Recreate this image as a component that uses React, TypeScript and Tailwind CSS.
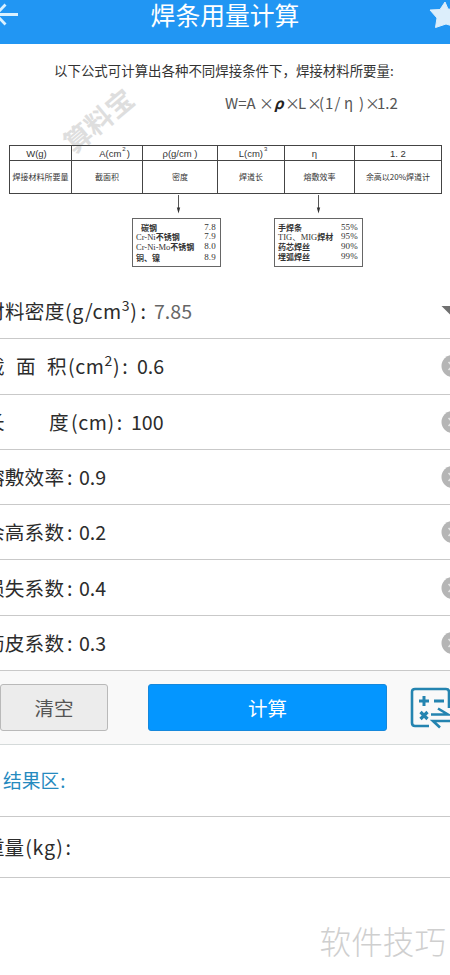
import type { ReactNode } from "react";

const columns = [
  { head: "W(g)", body: "焊接材料所要量", headCls: "pr-[8px]" },
  { head: "A(cm", sup: "2", tail: ")", body: "截面积", headCls: "pl-[15px]" },
  { head: "ρ(g/cm )", body: "密度", headCls: "pl-0" },
  { head: "L(cm)", sup: "3", body: "焊道长", headCls: "pl-[5px]" },
  { head: "η", body: "熔敷效率", headCls: "pr-[10px]" },
  { head: "1. 2", body: "余高以20%焊道计", headCls: "pl-0" },
];

const densities = [
  ["碳钢", "7.8", "pl-[5px]"],
  ["Cr-Ni|不锈钢", "7.9", ""],
  ["Cr-Ni-Mo|不锈钢", "8.0", ""],
  ["铜、镍", "8.9", ""],
];

const rates = [
  ["手焊条", "55%", ""],
  ["TIG、MIG|焊材", "95%", ""],
  ["药芯焊丝", "90%", ""],
  ["埋弧焊丝", "99%", ""],
];

function DownArrow() {
  return (
    <svg className="block h-[20px] w-[7px]" viewBox="0 0 7 20">
      <path d="M3.5 0V14" stroke="#555" strokeWidth="1" />
      <path d="M1.8 12.5H5.2L3.5 18.5Z" fill="#333" />
    </svg>
  );
}

function NoteBox({ rows }: { rows: string[][] }) {
  return (
    <div className="h-[49px] w-[89px] border border-[#666] pt-[4px] pr-[4px] pl-[3px] text-[8px] leading-[9.2px] text-[#333]">
      {rows.map(([name, value, cls]) => {
        const parts = name.split("|");
        return (
          <div key={name} className="flex justify-between whitespace-nowrap">
            <span className={cls}>
              {parts.length > 1 && (
                <span className="font-['Liberation_Serif','Noto_Sans_CJK_SC',serif] text-[8.5px]">
                  {parts[0]}
                </span>
              )}
              <span className="font-bold">{parts[parts.length - 1]}</span>
            </span>
            <span className="font-['Liberation_Serif',serif] text-[9px] tracking-[0.2px]">
              {value}
            </span>
          </div>
        );
      })}
    </div>
  );
}

function Formula() {
  return (
    <div className="relative h-[240px] overflow-hidden">
      <div className="absolute top-[62px] left-[53px] w-[90px] -rotate-[40deg] text-center text-[27px] leading-[27px] font-bold text-[#dedede]">
        算料宝
      </div>
      <p className="relative pt-[17px] pl-[54px] text-[13.450px] leading-[18px] whitespace-nowrap text-[#333]">
        以下公式可计算出各种不同焊接条件下，焊接材料所要量:
      </p>
      <div className="relative mt-[15px] flex pl-[225px] text-[15px] leading-[18px] whitespace-pre text-[#555]">
        <span className="w-[34px]">W=A</span>
        <span className="w-[15px]">×</span>
        <span className="w-[11px] font-bold text-[#222] italic">ρ</span>
        <span className="w-[13px]">×</span>
        <span className="w-[9px]">L</span>
        <span className="w-[12px]">×</span>
        <span className="w-[25px] tracking-[1px]">(1/</span>
        <span className="w-[15px]">η</span>
        <span className="w-[6px]">)</span>
        <span className="w-[12px]">×</span>
        <span>1.2</span>
      </div>
      <div className="relative mt-[33px] ml-[9px] grid w-[433px] grid-cols-[62px_71px_75px_67px_70px_87px] border-t border-l border-[#444] text-[#333]">
        {columns.map((c) => (
          <div key={c.body} className="border-r border-b border-[#444]">
            <div
              className={`h-[15px] border-b border-[#444] text-center font-['Liberation_Sans',sans-serif] text-[9.500px] leading-[16px] whitespace-nowrap ${c.headCls}`}
            >
              {c.head}
              {c.sup && (
                <sup className="top-[-6px] px-[1px] text-[6px]">{c.sup}</sup>
              )}
              {c.tail}
            </div>
            <div className="h-[32px] text-center text-[8px] leading-[32px] whitespace-nowrap">
              {c.body}
            </div>
          </div>
        ))}
      </div>
      <div className="relative mt-[1px] flex gap-[53px] pl-[132px]">
        <div>
          <div className="mb-[3px] pl-[43px]">
            <DownArrow />
          </div>
          <NoteBox rows={densities} />
        </div>
        <div>
          <div className="mb-[3px] pl-[41px]">
            <DownArrow />
          </div>
          <NoteBox rows={rates} />
        </div>
      </div>
    </div>
  );
}

function Field({
  label,
  value,
  width,
  muted,
  icon,
}: {
  label: ReactNode;
  value: string;
  width: string;
  muted?: boolean;
  icon: ReactNode;
}) {
  return (
    <div className="flex h-[55.3px] items-center overflow-hidden border-b border-[#c9c9c9] text-[19.600px] leading-[30px]">
      <div className={`-ml-[15px] shrink-0 whitespace-pre ${width}`}>{label}</div>
      <div className={`grow ${muted ? "text-[#666]" : ""}`}>{value}</div>
      <div className="-mr-[14px] shrink-0">{icon}</div>
    </div>
  );
}

function ClearIcon() {
  return (
    <svg className="block h-[22px] w-[23px]" viewBox="0 0 22 22">
      <circle cx="11" cy="11" r="11" fill="#b5b5b5" />
      <path d="M7 7L15 15M15 7L7 15" stroke="#e4e4e4" strokeWidth="1.6" />
    </svg>
  );
}

// four-character labels share the same width, so the colon lines up
function Label({ text }: { text: string }) {
  return (
    <span className="flex">
      <span className="w-[82px] tracking-[0.2px]">{text}</span>:
    </span>
  );
}

export default function App() {
  return (
    <div className="relative h-[975px] w-[450px] overflow-hidden bg-white font-['Noto_Sans_CJK_SC',sans-serif] text-[#2c2c2c]">
      <header className="flex h-[44px] items-start justify-between bg-[#2196f3] text-white">
        <svg className="-ml-[3px] h-[30px] w-[22px]" viewBox="0 0 22 30">
          <path d="M21 14.500H0M8.500 4.500L-1 14.500L8.500 24.500" fill="none" stroke="#d9f1ff" strokeWidth="2.8" />
        </svg>
        <h1 className="pl-[4px] text-[24.800px] leading-[29px]">焊条用量计算</h1>
        <svg className="-mr-[7px] h-[32px] w-[30px]" viewBox="0 0 30 32">
          <path
            d="M18 2L21 9L30 10L25 17L29 27L19 24L8.500 27.500L10 18L3 10L13 9.500Z"
            fill="#dceefb"
            stroke="#dceefb"
            strokeLinejoin="round"
          />
        </svg>
      </header>

      <Formula />

      <Field
        label={
          <span className="flex">
            <span className="w-[80px] tracking-[0.3px]">材料密度</span>
            <span className="tracking-[0.6px]">
              (g/cm<sup className="top-[-8px] text-[14px]">3</sup>)
            </span>
            <span className="pl-[3px]">:</span>
          </span>
        }
        value="7.85"
        width="w-[169px]"
        muted
        icon={
          <svg className="block h-[11px] w-[23px]" viewBox="0 0 22 11">
            <path d="M0 0H22L11 11Z" fill="#707070" />
          </svg>
        }
      />
      <Field
        label={
          <span className="flex">
            <span className="w-[31px]">截</span>
            <span className="w-[31px]">面</span>
            <span className="w-[21px]">积</span>
            <span className="tracking-[0.6px]">
              (cm<sup className="top-[-8px] text-[14px]">2</sup>)
            </span>
            <span className="pl-[2px]">:</span>
          </span>
        }
        value="0.6"
        width="w-[152px]"
        icon={<ClearIcon />}
      />
      <Field
        label={
          <span className="flex">
            <span className="w-[64px]">长</span>
            <span className="w-[22px]">度</span>
            <span className="tracking-[0.6px]">(cm)</span>
            <span className="pl-[2px]">:</span>
          </span>
        }
        value="100"
        width="w-[146px]"
        icon={<ClearIcon />}
      />
      <Field label={<Label text="熔敷效率" />} value="0.9" width="w-[94px]" icon={<ClearIcon />} />
      <Field label={<Label text="余高系数" />} value="0.2" width="w-[94px]" icon={<ClearIcon />} />
      <Field label={<Label text="损失系数" />} value="0.4" width="w-[94px]" icon={<ClearIcon />} />
      <Field label={<Label text="药皮系数" />} value="0.3" width="w-[94px]" icon={<ClearIcon />} />

      <div className="flex h-[74px] items-center border-b border-[#d5dada] bg-[#f9f9f9]">
        <button className="h-[47px] w-[108px] rounded-[3px] border border-[#b9b9b9] bg-[#ececec] text-[19.500px] text-[#555]">
          清空
        </button>
        <button className="ml-[40px] h-[47px] w-[239px] rounded-[3px] border border-[#1588dc] bg-[#0496ff] text-[19.500px] text-white">
          计算
        </button>
        <svg className="-mr-[10px] ml-[22px] h-[42px] w-[50px] shrink-0" viewBox="0 0 50 42" fill="none" stroke="#2484b0">
          <path d="M20 39H6Q3 39 3 36V5Q3 2 6 2H37Q40 2 40 5V21" strokeWidth="2.6" />
          <path d="M10 14H20M15 9V19M25 14H35" strokeWidth="3" />
          <path d="M11.500 25L18.500 32M18.500 25L11.500 32" strokeWidth="3.2" />
          <path d="M22 27.500H39L29 21.500M42 34H24L31 40.500" strokeWidth="2.6" />
        </svg>
      </div>

      <div className="flex h-[72px] items-center border-b border-[#c9c9c9] pl-[3px] text-[18.800px] text-[#268abf]">
        结果区<span className="pl-[1px]">:</span>
      </div>
      <div className="flex h-[61px] items-center border-b border-[#c9c9c9] text-[19.600px]">
        <span className="-ml-[15px] flex whitespace-nowrap">
          重量<span className="pl-[1px] tracking-[0.8px]">(kg)</span>
          <span className="pl-[2px]">:</span>
        </span>
      </div>

      <div className="mt-[41px] pr-[4px] text-right text-[31.600px] leading-[42px] font-light text-[#cfcfcf]">
        软件技巧
      </div>
    </div>
  );
}
